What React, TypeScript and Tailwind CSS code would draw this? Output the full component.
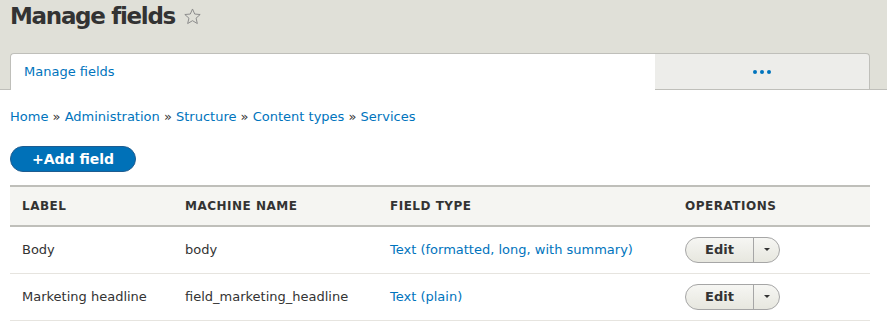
import React from 'react';

const font = { fontFamily: '"DejaVu Sans", sans-serif' };

const rows = [
  { label: 'Body', machine: 'body', type: 'Text (formatted, long, with summary)' },
  { label: 'Marketing headline', machine: 'field_marketing_headline', type: 'Text (plain)' },
];

const SplitButton: React.FC = () => (
  <div className="inline-flex h-[26px] w-[95px] items-stretch rounded-full border border-[#a6a6a6] bg-gradient-to-b from-[#f6f6f3] to-[#e7e7df] text-[13px] text-[#333]">
    <button className="flex w-[67px] items-center justify-center font-bold">Edit</button>
    <span className="flex flex-1 items-center justify-center border-l border-[#a6a6a6]">
      <svg width="8" height="5" viewBox="0 0 8 5">
        <path d="M1 1h6L4 4z" fill="#333" />
      </svg>
    </span>
  </div>
);

export default function App() {
  return (
    <div className="min-h-[336px] w-[887px] bg-white text-[#333]" style={font}>
      <div className="bg-[#e0e0d8] pt-[1px]">
        <div className="flex items-center gap-[8px] px-[10px]">
          <h1 className="text-[23px] font-bold leading-[30px] tracking-[-1.3px] text-[#333]">Manage fields</h1>
          <svg width="19" height="19" viewBox="0 0 24 24" className="mt-[1px]">
            <path
              d="M12 2.5l2.8 6.4 6.9.6-5.2 4.6 1.6 6.8L12 17.3l-6.1 3.6 1.6-6.8-5.2-4.6 6.9-.6z"
              fill="none"
              stroke="#888"
              strokeWidth="1.2"
              strokeLinejoin="round"
            />
          </svg>
        </div>
        <div className="mt-[22px] flex items-end border-b border-[#bfbfba] pl-[10px] pr-[17px]">
          <div className="-mb-px flex h-[37px] w-[645px] items-center rounded-tl-[4px] border-l border-t border-[#bfbfba] bg-white px-[13px] text-[13px] text-[#0074bd]">
            Manage fields
          </div>
          <div className="flex h-[36px] flex-1 items-center justify-center rounded-tr-[4px] border-r border-t border-[#bfbfba] bg-[#ededea]">
            <span className="flex gap-[3px]">
              <i className="h-[4px] w-[4px] rounded-full bg-[#0074bd]" />
              <i className="h-[4px] w-[4px] rounded-full bg-[#0074bd]" />
              <i className="h-[4px] w-[4px] rounded-full bg-[#0074bd]" />
            </span>
          </div>
        </div>
      </div>

      <div className="px-[10px] pr-[17px]">
        <nav className="mt-[18px] text-[13px] leading-[18px] text-[#0074bd]">
          Home <span className="text-[#333]">»</span> Administration <span className="text-[#333]">»</span> Structure{' '}
          <span className="text-[#333]">»</span> Content types <span className="text-[#333]">»</span> Services
        </nav>

        <button className="mt-[20px] flex h-[26px] w-[126px] items-center justify-center rounded-full border border-[#1e5c90] bg-[#0071b8] text-[14px] font-bold text-white">
          +Add field
        </button>

        <table className="mt-[13px] w-full border-collapse text-[13px]">
          <thead>
            <tr className="h-[40px] border-y-2 border-[#bfbfba] bg-[#f5f5f2] text-left text-[12px] font-bold uppercase tracking-[0.5px] text-[#333]">
              <th className="w-[163px] pl-[12px]">Label</th>
              <th className="w-[205px] pl-[12px]">Machine name</th>
              <th className="w-[295px] pl-[12px]">Field type</th>
              <th className="pl-[12px]">Operations</th>
            </tr>
          </thead>
          <tbody>
            {rows.map((r) => (
              <tr key={r.machine} className="h-[47px] border-b border-[#e6e4df]">
                <td className="pl-[12px]">{r.label}</td>
                <td className="pl-[12px]">{r.machine}</td>
                <td className="pl-[12px] text-[#0074bd]">{r.type}</td>
                <td className="pl-[12px]">
                  <SplitButton />
                </td>
              </tr>
            ))}
          </tbody>
        </table>
      </div>
    </div>
  );
}
